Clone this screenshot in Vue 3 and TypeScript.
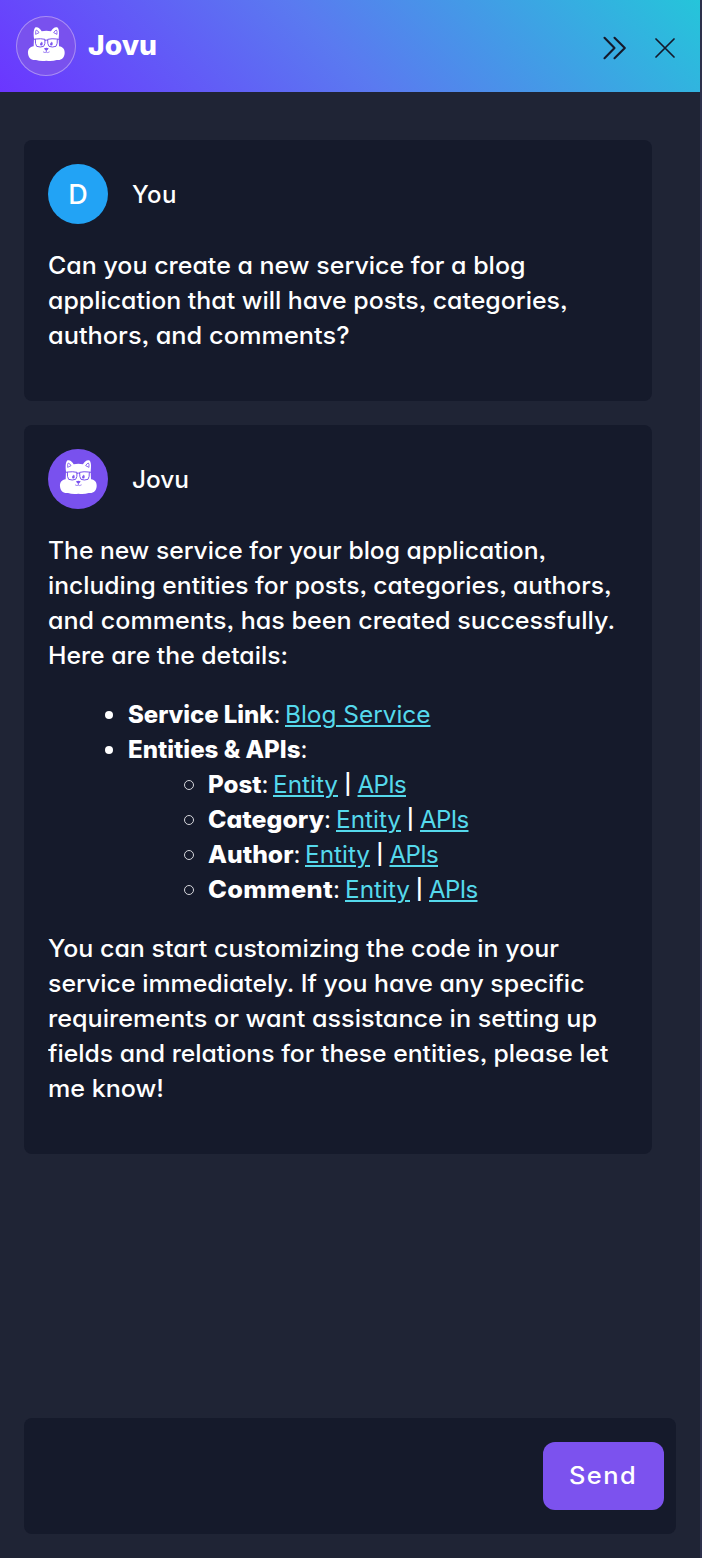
<script setup lang="ts">
import { defineComponent, h } from 'vue'

interface Line { text: string; width: number }
interface Entity { name: string; width: number }

/* Widens the glyphs slightly and spreads them so that a run of text takes up a given width. */
const vFit = {
  mounted(el: HTMLElement, binding: { value: number }) {
    const natural = el.getBoundingClientRect().width
    const count = (el.textContent ?? '').length
    const scale = count < 4 ? 1 : Math.max(1, Math.min(binding.value / natural, 1.06))
    el.style.letterSpacing = `${(binding.value / scale - natural) / count}px`
    el.style.width = `${binding.value}px`
    if (scale > 1) el.style.transform = `scaleX(${scale})`
  },
}

const question: Line[] = [
  { text: 'Can you create a new service for a blog', width: 477.5 },
  { text: 'application that will have posts, categories,', width: 519.5 },
  { text: 'authors, and comments?', width: 301.5 },
]
const intro: Line[] = [
  { text: 'The new service for your blog application,', width: 498 },
  { text: 'including entities for posts, categories, authors,', width: 563.5 },
  { text: 'and comments, has been created successfully.', width: 567 },
  { text: 'Here are the details:', width: 240 },
]
const outro: Line[] = [
  { text: 'You can start customizing the code in your', width: 511 },
  { text: 'service immediately. If you have any specific', width: 536.5 },
  { text: 'requirements or want assistance in setting up', width: 549 },
  { text: 'fields and relations for these entities, please let', width: 560.5 },
  { text: 'me know!', width: 116 },
]
const entities: Entity[] = [
  { name: 'Post', width: 53.5 },
  { name: 'Category', width: 116 },
  { name: 'Author', width: 85.5 },
  { name: 'Comment', width: 125 },
]

const Mascot = defineComponent(() => () =>
  h('svg', { viewBox: '0 0 180 180', width: 60, height: 60 }, [
    h('path', {
      fill: '#fff',
      d: 'M54 67C52 52 53 37 59 34C66 32 73 39 77 46Q91 42 105 46C109 39 116 32 123 34C130 37 130 53 128 67L129 91C141 92 147 101 146 112C145 126 136 134 122 132Q109 136 91 134Q73 136 60 132C46 134 37 126 36 112C35 101 41 92 53 91Z',
    }),
    h('g', { fill: 'none', stroke: '#7951ee', 'stroke-width': 3, 'stroke-linecap': 'round', 'stroke-linejoin': 'round' }, [
      h('path', { d: 'M59 54Q58 43 61 42Q66 44 69 50L63 53ZM123 54Q124 43 121 42Q116 44 113 50L119 53Z', 'stroke-width': 2.5 }),
      h('path', { d: 'M53 70L60 69Q74 67 87 70Q88 85 83 91Q73 95 62 91Q57 84 58 70M129 70L122 69Q108 67 95 70Q94 85 99 91Q109 95 120 91Q125 84 124 70M87 73Q91 71 95 73' }),
      h('path', { d: 'M91 101V108M82 108Q88 112 91 108Q94 112 100 108', 'stroke-width': 2 }),
    ]),
    h('g', { fill: '#7951ee' }, [
      h('ellipse', { cx: 76, cy: 83, rx: 4, ry: 5.5 }),
      h('ellipse', { cx: 106, cy: 83, rx: 4, ry: 5.5 }),
      h('path', { d: 'M84 97Q91 94 98 97Q96 102 91 104Q86 102 84 97Z' }),
    ]),
    h('g', { fill: '#fff' }, [
      h('circle', { cx: 74, cy: 80, r: 2 }),
      h('circle', { cx: 104, cy: 80, r: 2 }),
    ]),
  ]))
</script>

<template>
  <div class="panel">
    <header class="header">
      <div class="avatar bot ring"><Mascot /></div>
      <h1><span v-fit="69" class="fit">Jovu</span></h1>
      <div class="actions">
        <svg width="24" height="24" viewBox="0 0 24 24"><path d="M1.5 1.8 11.5 12 1.5 22.2M11.5 1.8 21.8 12 11.5 22.2" stroke-width="2.1" /></svg>
        <svg width="20" height="20" viewBox="0 0 20 20"><path d="M1 1 19 19M19 1 1 19" stroke-width="1.7" /></svg>
      </div>
    </header>

    <main class="chat">
      <section class="card">
        <div class="author"><div class="avatar user">D</div><span v-fit="45" class="fit">You</span></div>
        <p><span v-for="l in question" :key="l.text" class="line"><span v-fit="l.width" class="fit">{{ l.text }}</span></span></p>
      </section>

      <section class="card">
        <div class="author"><div class="avatar bot"><Mascot /></div><span v-fit="57" class="fit">Jovu</span></div>
        <p><span v-for="l in intro" :key="l.text" class="line"><span v-fit="l.width" class="fit">{{ l.text }}</span></span></p>
        <ul>
          <li><b v-fit="145.5" class="fit">Service Link</b><span v-fit="11.5" class="fit">: </span><a v-fit="145.5" class="fit">Blog Service</a></li>
          <li>
            <b v-fit="172.5" class="fit">Entities &amp; APIs</b><span>:</span>
            <ul class="nested">
              <li v-for="e in entities" :key="e.name"><b v-fit="e.width" class="fit">{{ e.name }}</b><span v-fit="11.5" class="fit">: </span><a v-fit="65" class="fit">Entity</a><span class="bar">|</span><a v-fit="48.5" class="fit">APIs</a></li>
            </ul>
          </li>
        </ul>
        <p><span v-for="l in outro" :key="l.text" class="line"><span v-fit="l.width" class="fit">{{ l.text }}</span></span></p>
      </section>
    </main>

    <footer class="composer">
      <button type="button"><span v-fit="68" class="fit">Send</span></button>
    </footer>
  </div>
</template>

<style>
body { margin: 0; background: #1f2435; }
</style>

<style scoped>
.panel {
  box-sizing: border-box;
  width: 702px;
  height: 1558px;
  display: flex;
  flex-direction: column;
  border-right: 2px solid #2d304b;
  background: #1f2435;
  color: #fff;
  font: 500 24px/35px Inter, "Open Sans", sans-serif;
  font-feature-settings: "cv11", "ss03";
}
.fit { display: inline-block; white-space: pre; transform-origin: 0 50%; }
.header {
  box-sizing: border-box;
  height: 92px;
  padding: 0 25px 0 16px;
  display: flex;
  align-items: center;
  background: linear-gradient(45deg, #6b36ff 0%, #5a7af0 48%, #25c5da 100%);
}
h1 { margin: 0 0 0 12px; font-size: 27px; font-weight: 800; line-height: 40px; }
.actions { margin-left: auto; margin-top: 4px; display: flex; align-items: center; gap: 28px; }
.actions path { fill: none; stroke: #15192b; stroke-linecap: round; stroke-linejoin: round; }
.avatar {
  width: 60px;
  height: 60px;
  border-radius: 50%;
  flex: none;
  display: flex;
  align-items: center;
  justify-content: center;
}
.bot { background: #7951ee; }
.ring { box-shadow: inset 0 0 0 1px #a78df5; }
.user { background: #22a3f5; font-size: 27px; }
.chat { flex: 1; padding: 48px 48px 0 24px; display: flex; flex-direction: column; gap: 24px; }
.card { padding: 24px 24px 48px; border-radius: 8px; background: #151a2b; }
.author { display: flex; align-items: center; gap: 24px; }
p { margin: 24px 0 0; }
.line { display: block; height: 35px; white-space: pre; }
ul { margin: 24px 0 0; padding: 0 0 0 80px; list-style: none; font-weight: 400; }
ul.nested { margin: 0; }
li { position: relative; }
li::before {
  content: "";
  position: absolute;
  left: -23px;
  top: 14px;
  width: 8px;
  height: 8px;
  border-radius: 50%;
  background: #fff;
}
.nested li::before { box-sizing: border-box; width: 10px; height: 10px; left: -24px; top: 13px; border: 1.2px solid #d6d7dc; background: none; }
b { font-weight: 800; }
.bar { display: inline-block; width: 19.5px; height: 35px; vertical-align: top; text-align: center; font-size: 20px; font-weight: 600; }
a { color: #55d9ec; text-decoration: underline; text-decoration-thickness: 2px; text-underline-offset: 2px; }
.composer {
  box-sizing: border-box;
  height: 116px;
  margin: 0 24px 24px;
  padding: 0 12px;
  display: flex;
  align-items: center;
  justify-content: flex-end;
  border-radius: 8px;
  background: #151a2b;
}
button {
  width: 121px;
  height: 68px;
  padding: 0 0 2px 26px;
  border: 0;
  border-radius: 12px;
  background: #7c52ee;
  color: #fff;
  font: 500 24px/35px Inter, "Open Sans", sans-serif;
  text-align: left;
}
</style>
